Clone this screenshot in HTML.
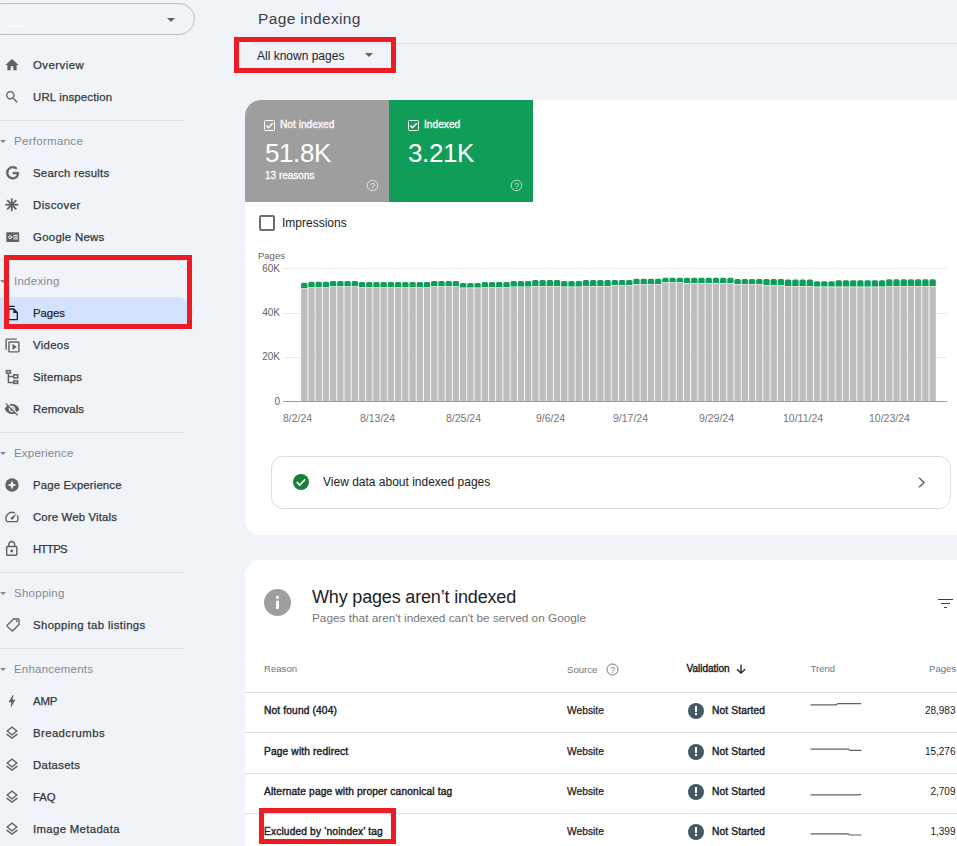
<!DOCTYPE html>
<html><head><meta charset="utf-8">
<style>
*{box-sizing:border-box;margin:0;padding:0}
html,body{width:957px;height:846px;overflow:hidden;background:#f0f3f8;font-family:"Liberation Sans",sans-serif;color:#202124}
.abs{position:absolute}
#side{position:absolute;left:0;top:0;width:240px;height:846px}
.pill{position:absolute;left:-14px;top:3px;width:209px;height:32px;border:1px solid #bcbfc3;border-radius:16px}
.nav{position:absolute;left:33px;font-size:11.4px;color:#33373a;line-height:16px;white-space:nowrap;-webkit-text-stroke:0.25px #33373a}
.hdr{position:absolute;left:14px;font-size:11.5px;color:#85898e;line-height:16px;white-space:nowrap}
.sep{position:absolute;left:0;width:184px;height:1px;background:#dfe1e5}
.tri{position:absolute;left:0px;width:0;height:0;border-left:3px solid transparent;border-right:3px solid transparent;border-top:3px solid #85898e}
.red{position:absolute;border:5px solid #ed1c24}
.card{position:absolute;left:245px;width:730px;background:#fff;border-radius:16px}
.t11{font-size:10.5px;line-height:13px;white-space:nowrap}
.med{-webkit-text-stroke:0.3px currentColor}
.row{position:absolute;left:245px;width:712px;height:1px;background:#e0e0e0}
.yl{position:absolute;left:250px;width:30px;text-align:right;font-size:10px;line-height:12px;color:#5f6368}
.xl{position:absolute;top:412px;font-size:10.5px;line-height:12px;color:#757575;white-space:nowrap}
.src{position:absolute;left:567px;font-size:10.2px;letter-spacing:0.05px;margin-top:0.3px;line-height:13px;color:#202124;white-space:nowrap;-webkit-text-stroke:0.25px #202124}
.rsn{position:absolute;left:264px;font-size:10.2px;letter-spacing:0.15px;line-height:13px;color:#202124;white-space:nowrap;-webkit-text-stroke:0.4px #202124;margin-top:0.3px}
.ns{position:absolute;left:712px;font-size:10.2px;letter-spacing:0.15px;margin-top:0.3px;line-height:13px;color:#202124;white-space:nowrap;-webkit-text-stroke:0.4px #202124}
.num{position:absolute;left:885px;width:70.5px;text-align:right;font-size:10px;line-height:13px;color:#202124;white-space:nowrap}
.vi{position:absolute;left:688px;width:16px;height:16px;border-radius:50%;background:#455a64}
.vi:before{content:"";position:absolute;left:7px;top:3.5px;width:2px;height:5.5px;background:#fff}
.vi:after{content:"";position:absolute;left:7px;top:10.5px;width:2px;height:2px;background:#fff}
</style></head><body>
<div id="side">
  <div class="pill"></div>
  <div class="abs" style="left:167px;top:18px;width:0;height:0;border-left:4px solid transparent;border-right:4px solid transparent;border-top:4px solid #5f6368"></div>
  <div class="abs" style="left:9px;top:26px;width:18px;height:1px;background:#fff"></div>

  <div class="nav" style="top:57px;letter-spacing:0.477px">Overview</div>
  <div class="nav" style="top:89px;letter-spacing:0.177px">URL inspection</div>
  <div class="sep" style="top:120px"></div>
  <div class="tri" style="top:140px"></div><div class="hdr" style="top:133px;letter-spacing:0.296px">Performance</div>
  <div class="nav" style="top:165px;letter-spacing:0.263px">Search results</div>
  <div class="nav" style="top:197px;letter-spacing:0.411px">Discover</div>
  <div class="nav" style="top:229px;letter-spacing:0.292px">Google News</div>
  <div class="sep" style="top:260px"></div>

  <div class="abs" style="left:0;top:297px;width:193px;height:32px;background:#d3e3fd;border-radius:0 16px 16px 0"></div>
  <div class="tri" style="top:280px"></div><div class="hdr" style="top:273px;letter-spacing:0.264px">Indexing</div>
  <div class="nav" style="top:305px;color:#202124;letter-spacing:-0.083px">Pages</div>
  <div class="nav" style="top:337px;letter-spacing:0.296px">Videos</div>
  <div class="nav" style="top:369px;letter-spacing:0.214px">Sitemaps</div>
  <div class="nav" style="top:401px;letter-spacing:0.057px">Removals</div>
  <div class="sep" style="top:432px"></div>
  <div class="tri" style="top:452px"></div><div class="hdr" style="top:445px;letter-spacing:0.195px">Experience</div>
  <div class="nav" style="top:477px;letter-spacing:0.122px">Page Experience</div>
  <div class="nav" style="top:509px;letter-spacing:0.141px">Core Web Vitals</div>
  <div class="nav" style="top:541px;letter-spacing:-0.669px">HTTPS</div>
  <div class="sep" style="top:572px"></div>
  <div class="tri" style="top:592px"></div><div class="hdr" style="top:585px;letter-spacing:0.261px">Shopping</div>
  <div class="nav" style="top:617px;letter-spacing:0.356px">Shopping tab listings</div>
  <div class="sep" style="top:648px"></div>
  <div class="tri" style="top:668px"></div><div class="hdr" style="top:661px;letter-spacing:0.198px">Enhancements</div>
  <div class="nav" style="top:693px;letter-spacing:-0.129px">AMP</div>
  <div class="nav" style="top:725px;letter-spacing:0.386px">Breadcrumbs</div>
  <div class="nav" style="top:757px;letter-spacing:0.293px">Datasets</div>
  <div class="nav" style="top:789px;letter-spacing:-0.066px">FAQ</div>
  <div class="nav" style="top:821px;letter-spacing:0.327px">Image Metadata</div>

  <svg class="abs" style="left:4.0px;top:57.0px" width="16" height="16" viewBox="0 0 24 24" ><path d="M10 20v-6h4v6h5v-8h3L12 3 2 12h3v8z" fill="#5f6368" /></svg>
<svg class="abs" style="left:4.0px;top:89.0px" width="16" height="16" viewBox="0 0 24 24" ><path d="M15.5 14h-.79l-.28-.27C15.41 12.59 16 11.11 16 9.5 16 5.91 13.09 3 9.5 3S3 5.91 3 9.5 5.91 16 9.5 16c1.61 0 3.09-.59 4.23-1.57l.27.28v.79l5 4.99L20.49 19l-4.99-5zm-6 0C7.01 14 5 11.99 5 9.5S7.01 5 9.5 5 14 7.01 14 9.5 11.99 14 9.5 14z" fill="#5f6368" /></svg>
<svg class="abs" style="left:4.8px;top:165.2px" width="15.5" height="15.5" viewBox="0 0 24 24" ><path d="M21.35 11.1h-9.17v2.73h6.51c-.33 3.81-3.5 5.44-6.5 5.44C8.36 19.27 5 16.25 5 12c0-4.1 3.2-7.27 7.2-7.27 3.09 0 4.9 1.97 4.9 1.97L19 4.72S16.56 2 12.1 2C6.42 2 2.03 6.8 2.03 12c0 5.05 4.13 10 10.22 10 5.35 0 9.25-3.67 9.25-9.09 0-1.15-.15-1.81-.15-1.81z" fill="#5f6368" stroke="#5f6368" stroke-width="0.9"/></svg>
<svg class="abs" style="left:4.2px;top:197.2px" width="15.5" height="15.5" viewBox="0 0 24 24" ><line x1="12" y1="2" x2="12" y2="22" transform="rotate(0 12 12)" stroke="#5f6368" stroke-width="2.8"/><line x1="12" y1="2" x2="12" y2="22" transform="rotate(45 12 12)" stroke="#5f6368" stroke-width="2.8"/><line x1="12" y1="2" x2="12" y2="22" transform="rotate(90 12 12)" stroke="#5f6368" stroke-width="2.8"/><line x1="12" y1="2" x2="12" y2="22" transform="rotate(135 12 12)" stroke="#5f6368" stroke-width="2.8"/></svg>
<svg class="abs" style="left:4.8px;top:229.2px" width="15.5" height="15.5" viewBox="0 0 24 24" ><rect x="2" y="5" width="20" height="15" rx="1.2" fill="#5f6368"/><circle cx="8" cy="12.5" r="2.4" fill="none" stroke="#f0f3f8" stroke-width="1.4"/><rect x="8" y="11.8" width="3.4" height="1.4" fill="#f0f3f8"/><rect x="8.6" y="8.6" width="3" height="2.2" fill="#5f6368"/><rect x="13" y="9" width="7" height="1.6" fill="#f0f3f8"/><rect x="13" y="11.8" width="7" height="1.6" fill="#f0f3f8"/><rect x="13" y="14.6" width="7" height="1.6" fill="#f0f3f8"/></svg>
<svg class="abs" style="left:4.0px;top:305.0px" width="16" height="16" viewBox="0 0 24 24" ><path d="M16 1H4c-1.1 0-2 .9-2 2v14h2V3h12V1zm-1 4H8c-1.1 0-1.99.9-1.99 2L6 21c0 1.1.89 2 1.99 2H19c1.1 0 2-.9 2-2V11l-6-6zM8 21V7h6v5h5v9H8z" fill="#202124" /></svg>
<svg class="abs" style="left:3.5px;top:336.5px" width="17" height="17" viewBox="0 0 24 24" ><g transform="translate(0,24) scale(1,-1)"><path d="M4 6H2v14c0 1.1.9 2 2 2h14v-2H4V6zm16-4H8c-1.1 0-2 .9-2 2v12c0 1.1.9 2 2 2h12c1.1 0 2-.9 2-2V4c0-1.1-.9-2-2-2zm0 14H8V4h12v12zM12 5.5v9l6-4.5z" fill="#5f6368" /></g></svg>
<svg class="abs" style="left:4.0px;top:369.0px" width="16" height="16" viewBox="0 0 16 16" ><g fill="none" stroke="#5f6368" stroke-width="1.5"><rect x="2.400" y="1.600" width="4" height="2.500"/><rect x="9.800" y="5.800" width="3.900" height="3.200"/><rect x="9.800" y="11.900" width="3.900" height="2.500"/><path d="M4.400 4.700 V13.400 H9.200 M4.400 7.400 H9.200"/></g></svg>
<svg class="abs" style="left:4.0px;top:401.0px" width="16" height="16" viewBox="0 0 24 24" ><path d="M12 7c2.76 0 5 2.24 5 5 0 .65-.13 1.26-.36 1.83l2.92 2.92c1.51-1.26 2.7-2.89 3.43-4.75-1.73-4.39-6-7.5-11-7.5-1.4 0-2.74.25-3.98.7l2.16 2.16C10.74 7.13 11.35 7 12 7zM2 4.27l2.28 2.28.46.46C3.08 8.3 1.78 10.02 1 12c1.73 4.39 6 7.5 11 7.5 1.55 0 3.03-.3 4.38-.84l.42.42L19.73 22 21 20.73 3.27 3 2 4.27zM7.53 9.8l1.55 1.55c-.05.21-.08.43-.08.65 0 1.66 1.34 3 3 3 .22 0 .44-.03.65-.08l1.55 1.55c-.67.33-1.41.53-2.2.53-2.76 0-5-2.24-5-5 0-.79.2-1.53.53-2.2zm4.31-.78l3.15 3.15.02-.16c0-1.66-1.34-3-3-3l-.17.01z" fill="#5f6368" /></svg>
<svg class="abs" style="left:4.0px;top:477.0px" width="16" height="16" viewBox="0 0 24 24" ><circle cx="12" cy="12" r="10" fill="#5f6368"/><path d="M12 5 L13.9 10.1 L19 12 L13.9 13.9 L12 19 L10.1 13.9 L5 12 L10.1 10.1 Z" fill="#f0f3f8"/></svg>
<svg class="abs" style="left:4.0px;top:509.0px" width="16" height="16" viewBox="0 0 24 24" ><path d="M20.38 8.57l-1.23 1.85a8 8 0 0 1-.22 7.58H5.07A8 8 0 0 1 15.58 6.85l1.85-1.23A10 10 0 0 0 3.35 19a2 2 0 0 0 1.72 1h13.85a2 2 0 0 0 1.74-1 10 10 0 0 0-.27-10.44zm-9.79 6.84a2 2 0 0 0 2.83 0l5.66-8.49-8.49 5.66a2 2 0 0 0 0 2.83z" fill="#5f6368" /></svg>
<svg class="abs" style="left:3.1px;top:540.2px" width="17.5" height="17.5" viewBox="0 0 24 24" ><path d="M18 8h-1V6c0-2.76-2.24-5-5-5S7 3.24 7 6v2H6c-1.1 0-2 .9-2 2v10c0 1.1.9 2 2 2h12c1.1 0 2-.9 2-2V10c0-1.1-.9-2-2-2zM9 6c0-1.66 1.34-3 3-3s3 1.34 3 3v2H9V6zm9 14H6V10h12v10zm-6-3c1.1 0 2-.9 2-2s-.9-2-2-2-2 .9-2 2 .9 2 2 2z" fill="#5f6368" /></svg>
<svg class="abs" style="left:4.8px;top:617.0px" width="16" height="16" viewBox="0 0 24 24" ><g transform="translate(24,0) scale(-1,1)"><path d="M21.41 11.58l-9-9C12.05 2.22 11.55 2 11 2H4c-1.1 0-2 .9-2 2v7c0 .55.22 1.05.59 1.42l9 9c.36.36.86.58 1.41.58s1.05-.22 1.41-.59l7-7c.37-.36.59-.86.59-1.41s-.23-1.060-.59-1.420zM13 20.010L4 11V4h7v-.010l9 9-7 7.020z" fill="#5f6368" /><circle cx="6.5" cy="6.5" r="1.5" fill="#5f6368"/></g></svg>
<svg class="abs" style="left:4.0px;top:693.0px" width="16" height="16" viewBox="0 0 24 24" ><path d="M11 21h-1l1-7H7.5c-.58 0-.57-.32-.38-.66.19-.34.05-.08.07-.12C8.48 10.94 10.42 7.54 13 3h1l-1 7h3.5c.49 0 .56.33.47.51l-.07.15C12.96 17.55 11 21 11 21z" fill="#5f6368" /></svg>
<svg class="abs" style="left:4.0px;top:725.0px" width="16" height="16" viewBox="0 0 24 24" ><path d="M11.99 18.54l-7.37-5.73L3 14.07l9 7 9-7-1.63-1.27-7.38 5.74zM12 16l7.36-5.73L21 9l-9-7-9 7 1.63 1.27L12 16zm0-11.470L17.740 9 12 13.470 6.260 9 12 4.530z" fill="#5f6368" /></svg>
<svg class="abs" style="left:4.0px;top:757.0px" width="16" height="16" viewBox="0 0 24 24" ><path d="M11.99 18.54l-7.37-5.73L3 14.07l9 7 9-7-1.63-1.27-7.38 5.74zM12 16l7.36-5.73L21 9l-9-7-9 7 1.63 1.27L12 16zm0-11.470L17.740 9 12 13.470 6.260 9 12 4.530z" fill="#5f6368" /></svg>
<svg class="abs" style="left:4.0px;top:789.0px" width="16" height="16" viewBox="0 0 24 24" ><path d="M11.99 18.54l-7.37-5.73L3 14.07l9 7 9-7-1.63-1.27-7.38 5.74zM12 16l7.36-5.73L21 9l-9-7-9 7 1.63 1.27L12 16zm0-11.470L17.740 9 12 13.470 6.260 9 12 4.530z" fill="#5f6368" /></svg>
<svg class="abs" style="left:4.0px;top:821.0px" width="16" height="16" viewBox="0 0 24 24" ><path d="M11.99 18.54l-7.37-5.73L3 14.07l9 7 9-7-1.63-1.27-7.38 5.74zM12 16l7.36-5.73L21 9l-9-7-9 7 1.63 1.27L12 16zm0-11.470L17.740 9 12 13.470 6.260 9 12 4.530z" fill="#5f6368" /></svg>
  <div class="red" style="left:4px;top:255px;width:188px;height:74px"></div>
</div>

<!-- MAIN -->
<div class="abs" style="left:258px;top:8.6px;font-size:15.5px;line-height:20px;color:#3c4043;white-space:nowrap;letter-spacing:0.35px">Page indexing</div>
<div class="abs" style="left:254px;top:43px;width:703px;height:1px;background:#dadce0"></div>
<div class="abs" style="left:257px;top:47.5px;font-size:12px;line-height:16px;color:#202124;white-space:nowrap">All known pages</div>
<div class="abs" style="left:365px;top:53px;width:0;height:0;border-left:4px solid transparent;border-right:4px solid transparent;border-top:4px solid #5f6368"></div>
<div class="red" style="left:234px;top:37px;width:162px;height:36px"></div>

<div class="card" style="top:100px;height:435px"></div>
<div class="abs" style="left:245px;top:100px;width:144px;height:102px;background:#9e9e9e;border-radius:16px 0 0 0"></div>
<div class="abs" style="left:389px;top:100px;width:144px;height:102px;background:#0f9d58"></div>
<!-- tile checkboxes -->
<svg class="abs" style="left:264px;top:120px" width="11" height="11" viewBox="0 0 11 11"><rect x="0.5" y="0.5" width="10" height="10" rx="1" fill="none" stroke="#fff" stroke-width="1"/><path d="M2.4 5.6 L4.5 7.7 L8.7 3.2" fill="none" stroke="#fff" stroke-width="1.5"/></svg>
<svg class="abs" style="left:408px;top:120px" width="11" height="11" viewBox="0 0 11 11"><rect x="0.5" y="0.5" width="10" height="10" rx="1" fill="none" stroke="#fff" stroke-width="1"/><path d="M2.4 5.6 L4.5 7.7 L8.7 3.2" fill="none" stroke="#fff" stroke-width="1.5"/></svg>
<div class="abs" style="left:280px;top:118px;color:#fff;font-size:10.2px;line-height:13px;white-space:nowrap;-webkit-text-stroke:0.3px #fff">Not indexed</div>
<div class="abs" style="left:424px;top:118px;color:#fff;font-size:10.2px;line-height:13px;white-space:nowrap;-webkit-text-stroke:0.3px #fff">Indexed</div>
<div class="abs" style="left:265px;top:138px;color:#fff;font-size:26px;line-height:30px;white-space:nowrap;letter-spacing:-0.4px">51.8K</div>
<div class="abs" style="left:408px;top:138px;color:#fff;font-size:26px;line-height:30px;white-space:nowrap;letter-spacing:-0.4px">3.21K</div>
<div class="abs" style="left:265px;top:169.5px;color:#fff;font-size:10px;line-height:12px;white-space:nowrap;-webkit-text-stroke:0.3px #fff">13 reasons</div>
<!-- help icons in tiles -->
<svg class="abs" style="left:366px;top:179px" width="13" height="13" viewBox="0 0 13 13"><circle cx="6.5" cy="6.5" r="5.3" fill="none" stroke="#fff" stroke-opacity="0.7" stroke-width="1"/><text x="6.5" y="9.6" text-anchor="middle" font-family="Liberation Sans" font-size="8.5" fill="#fff" fill-opacity="0.75">?</text></svg>
<svg class="abs" style="left:510px;top:179px" width="13" height="13" viewBox="0 0 13 13"><circle cx="6.5" cy="6.5" r="5.3" fill="none" stroke="#fff" stroke-opacity="0.7" stroke-width="1"/><text x="6.5" y="9.6" text-anchor="middle" font-family="Liberation Sans" font-size="8.5" fill="#fff" fill-opacity="0.75">?</text></svg>

<div class="abs" style="left:258.5px;top:215px;width:16px;height:16px;border:2px solid #6e6e6e;border-radius:2px"></div>
<div class="abs" style="left:282px;top:214.5px;font-size:12px;line-height:16px;color:#202124;white-space:nowrap">Impressions</div>

<svg class="abs" style="left:0;top:0" width="957" height="846" viewBox="0 0 957 846">
  <g stroke="#ebebeb" stroke-width="1">
    <line x1="283" y1="268.5" x2="947" y2="268.5"/>
    <line x1="283" y1="313.5" x2="947" y2="313.5"/>
    <line x1="283" y1="357.5" x2="947" y2="357.5"/>
  </g>
  <path d="M301.10 288.3 V284.3 Q301.10 282.7 302.70 282.7 H305.82 Q307.42 282.7 307.42 284.3 V288.3 Z" fill="#0f9d58"/>
<rect x="301.10" y="288.9" width="6.32" height="112.1" fill="#bdbdbd"/>
<path d="M308.32 287.2 V283.4 Q308.32 281.8 309.92 281.8 H313.05 Q314.65 281.8 314.65 283.4 V287.2 Z" fill="#0f9d58"/>
<rect x="308.32" y="287.8" width="6.32" height="113.2" fill="#bdbdbd"/>
<path d="M315.55 287.2 V283.4 Q315.55 281.8 317.15 281.8 H320.27 Q321.87 281.8 321.87 283.4 V287.2 Z" fill="#0f9d58"/>
<rect x="315.55" y="287.8" width="6.32" height="113.2" fill="#bdbdbd"/>
<path d="M322.77 287.2 V283.4 Q322.77 281.8 324.37 281.8 H327.49 Q329.09 281.8 329.09 283.4 V287.2 Z" fill="#0f9d58"/>
<rect x="322.77" y="287.8" width="6.32" height="113.2" fill="#bdbdbd"/>
<path d="M329.99 286.2 V282.6 Q329.99 281.0 331.59 281.0 H334.71 Q336.31 281.0 336.31 282.6 V286.2 Z" fill="#0f9d58"/>
<rect x="329.99" y="286.8" width="6.32" height="114.2" fill="#bdbdbd"/>
<path d="M337.21 286.2 V282.6 Q337.21 281.0 338.81 281.0 H341.94 Q343.54 281.0 343.54 282.6 V286.2 Z" fill="#0f9d58"/>
<rect x="337.21" y="286.8" width="6.32" height="114.2" fill="#bdbdbd"/>
<path d="M344.44 286.2 V282.6 Q344.44 281.0 346.04 281.0 H349.16 Q350.76 281.0 350.76 282.6 V286.2 Z" fill="#0f9d58"/>
<rect x="344.44" y="286.8" width="6.32" height="114.2" fill="#bdbdbd"/>
<path d="M351.66 286.2 V282.6 Q351.66 281.0 353.26 281.0 H356.38 Q357.98 281.0 357.98 282.6 V286.2 Z" fill="#0f9d58"/>
<rect x="351.66" y="286.8" width="6.32" height="114.2" fill="#bdbdbd"/>
<path d="M358.88 287.2 V283.6 Q358.88 282.0 360.48 282.0 H363.60 Q365.20 282.0 365.20 283.6 V287.2 Z" fill="#0f9d58"/>
<rect x="358.88" y="287.8" width="6.32" height="113.2" fill="#bdbdbd"/>
<path d="M366.10 287.2 V283.6 Q366.10 282.0 367.70 282.0 H370.83 Q372.43 282.0 372.43 283.6 V287.2 Z" fill="#0f9d58"/>
<rect x="366.10" y="287.8" width="6.32" height="113.2" fill="#bdbdbd"/>
<path d="M373.33 287.2 V283.6 Q373.33 282.0 374.93 282.0 H378.05 Q379.65 282.0 379.65 283.6 V287.2 Z" fill="#0f9d58"/>
<rect x="373.33" y="287.8" width="6.32" height="113.2" fill="#bdbdbd"/>
<path d="M380.55 287.2 V283.6 Q380.55 282.0 382.15 282.0 H385.27 Q386.87 282.0 386.87 283.6 V287.2 Z" fill="#0f9d58"/>
<rect x="380.55" y="287.8" width="6.32" height="113.2" fill="#bdbdbd"/>
<path d="M387.77 287.2 V283.6 Q387.77 282.0 389.37 282.0 H392.50 Q394.10 282.0 394.10 283.6 V287.2 Z" fill="#0f9d58"/>
<rect x="387.77" y="287.8" width="6.32" height="113.2" fill="#bdbdbd"/>
<path d="M395.00 287.2 V283.6 Q395.00 282.0 396.60 282.0 H399.72 Q401.32 282.0 401.32 283.6 V287.2 Z" fill="#0f9d58"/>
<rect x="395.00" y="287.8" width="6.32" height="113.2" fill="#bdbdbd"/>
<path d="M402.22 287.2 V283.6 Q402.22 282.0 403.82 282.0 H406.94 Q408.54 282.0 408.54 283.6 V287.2 Z" fill="#0f9d58"/>
<rect x="402.22" y="287.8" width="6.32" height="113.2" fill="#bdbdbd"/>
<path d="M409.44 287.2 V283.6 Q409.44 282.0 411.04 282.0 H414.16 Q415.76 282.0 415.76 283.6 V287.2 Z" fill="#0f9d58"/>
<rect x="409.44" y="287.8" width="6.32" height="113.2" fill="#bdbdbd"/>
<path d="M416.66 287.2 V283.6 Q416.66 282.0 418.26 282.0 H421.39 Q422.99 282.0 422.99 283.6 V287.2 Z" fill="#0f9d58"/>
<rect x="416.66" y="287.8" width="6.32" height="113.2" fill="#bdbdbd"/>
<path d="M423.89 287.2 V283.6 Q423.89 282.0 425.49 282.0 H428.61 Q430.21 282.0 430.21 283.6 V287.2 Z" fill="#0f9d58"/>
<rect x="423.89" y="287.8" width="6.32" height="113.2" fill="#bdbdbd"/>
<path d="M431.11 286.2 V282.6 Q431.11 281.0 432.71 281.0 H435.83 Q437.43 281.0 437.43 282.6 V286.2 Z" fill="#0f9d58"/>
<rect x="431.11" y="286.8" width="6.32" height="114.2" fill="#bdbdbd"/>
<path d="M438.33 286.2 V282.6 Q438.33 281.0 439.93 281.0 H443.05 Q444.65 281.0 444.65 282.6 V286.2 Z" fill="#0f9d58"/>
<rect x="438.33" y="286.8" width="6.32" height="114.2" fill="#bdbdbd"/>
<path d="M445.55 286.2 V282.6 Q445.55 281.0 447.15 281.0 H450.28 Q451.88 281.0 451.88 282.6 V286.2 Z" fill="#0f9d58"/>
<rect x="445.55" y="286.8" width="6.32" height="114.2" fill="#bdbdbd"/>
<path d="M452.78 286.2 V282.6 Q452.78 281.0 454.38 281.0 H457.50 Q459.10 281.0 459.10 282.6 V286.2 Z" fill="#0f9d58"/>
<rect x="452.78" y="286.8" width="6.32" height="114.2" fill="#bdbdbd"/>
<path d="M460.00 287.6 V284.5 Q460.00 282.9 461.60 282.9 H464.72 Q466.32 282.9 466.32 284.5 V287.6 Z" fill="#0f9d58"/>
<rect x="460.00" y="288.2" width="6.32" height="112.8" fill="#bdbdbd"/>
<path d="M467.22 287.6 V284.5 Q467.22 282.9 468.82 282.9 H471.95 Q473.55 282.9 473.55 284.5 V287.6 Z" fill="#0f9d58"/>
<rect x="467.22" y="288.2" width="6.32" height="112.8" fill="#bdbdbd"/>
<path d="M474.45 287.6 V284.5 Q474.45 282.9 476.05 282.9 H479.17 Q480.77 282.9 480.77 284.5 V287.6 Z" fill="#0f9d58"/>
<rect x="474.45" y="288.2" width="6.32" height="112.8" fill="#bdbdbd"/>
<path d="M481.67 287.2 V283.6 Q481.67 282.0 483.27 282.0 H486.39 Q487.99 282.0 487.99 283.6 V287.2 Z" fill="#0f9d58"/>
<rect x="481.67" y="287.8" width="6.32" height="113.2" fill="#bdbdbd"/>
<path d="M488.89 287.2 V283.6 Q488.89 282.0 490.49 282.0 H493.61 Q495.21 282.0 495.21 283.6 V287.2 Z" fill="#0f9d58"/>
<rect x="488.89" y="287.8" width="6.32" height="113.2" fill="#bdbdbd"/>
<path d="M496.11 287.2 V283.6 Q496.11 282.0 497.71 282.0 H500.84 Q502.44 282.0 502.44 283.6 V287.2 Z" fill="#0f9d58"/>
<rect x="496.11" y="287.8" width="6.32" height="113.2" fill="#bdbdbd"/>
<path d="M503.34 287.2 V283.6 Q503.34 282.0 504.94 282.0 H508.06 Q509.66 282.0 509.66 283.6 V287.2 Z" fill="#0f9d58"/>
<rect x="503.34" y="287.8" width="6.32" height="113.2" fill="#bdbdbd"/>
<path d="M510.56 286.4 V282.6 Q510.56 281.0 512.16 281.0 H515.28 Q516.88 281.0 516.88 282.6 V286.4 Z" fill="#0f9d58"/>
<rect x="510.56" y="287.0" width="6.32" height="114.0" fill="#bdbdbd"/>
<path d="M517.78 286.4 V282.6 Q517.78 281.0 519.38 281.0 H522.50 Q524.10 281.0 524.10 282.6 V286.4 Z" fill="#0f9d58"/>
<rect x="517.78" y="287.0" width="6.32" height="114.0" fill="#bdbdbd"/>
<path d="M525.00 286.4 V282.6 Q525.00 281.0 526.60 281.0 H529.73 Q531.33 281.0 531.33 282.6 V286.4 Z" fill="#0f9d58"/>
<rect x="525.00" y="287.0" width="6.32" height="114.0" fill="#bdbdbd"/>
<path d="M532.23 285.9 V281.5 Q532.23 279.9 533.83 279.9 H536.95 Q538.55 279.9 538.55 281.5 V285.9 Z" fill="#0f9d58"/>
<rect x="532.23" y="286.5" width="6.32" height="114.5" fill="#bdbdbd"/>
<path d="M539.45 285.9 V281.5 Q539.45 279.9 541.05 279.9 H544.17 Q545.77 279.9 545.77 281.5 V285.9 Z" fill="#0f9d58"/>
<rect x="539.45" y="286.5" width="6.32" height="114.5" fill="#bdbdbd"/>
<path d="M546.67 285.9 V281.5 Q546.67 279.9 548.27 279.9 H551.40 Q553.00 279.9 553.00 281.5 V285.9 Z" fill="#0f9d58"/>
<rect x="546.67" y="286.5" width="6.32" height="114.5" fill="#bdbdbd"/>
<path d="M553.90 285.9 V281.5 Q553.90 279.9 555.50 279.9 H558.62 Q560.22 279.9 560.22 281.5 V285.9 Z" fill="#0f9d58"/>
<rect x="553.90" y="286.5" width="6.32" height="114.5" fill="#bdbdbd"/>
<path d="M561.12 286.5 V282.5 Q561.12 280.9 562.72 280.9 H565.84 Q567.44 280.9 567.44 282.5 V286.5 Z" fill="#0f9d58"/>
<rect x="561.12" y="287.1" width="6.32" height="113.9" fill="#bdbdbd"/>
<path d="M568.34 286.5 V282.5 Q568.34 280.9 569.94 280.9 H573.06 Q574.66 280.9 574.66 282.5 V286.5 Z" fill="#0f9d58"/>
<rect x="568.34" y="287.1" width="6.32" height="113.9" fill="#bdbdbd"/>
<path d="M575.56 286.5 V282.5 Q575.56 280.9 577.16 280.9 H580.29 Q581.89 280.9 581.89 282.5 V286.5 Z" fill="#0f9d58"/>
<rect x="575.56" y="287.1" width="6.32" height="113.9" fill="#bdbdbd"/>
<path d="M582.79 285.9 V281.5 Q582.79 279.9 584.39 279.9 H587.51 Q589.11 279.9 589.11 281.5 V285.9 Z" fill="#0f9d58"/>
<rect x="582.79" y="286.5" width="6.32" height="114.5" fill="#bdbdbd"/>
<path d="M590.01 285.9 V281.5 Q590.01 279.9 591.61 279.9 H594.73 Q596.33 279.9 596.33 281.5 V285.9 Z" fill="#0f9d58"/>
<rect x="590.01" y="286.5" width="6.32" height="114.5" fill="#bdbdbd"/>
<path d="M597.23 285.9 V281.5 Q597.23 279.9 598.83 279.9 H601.95 Q603.55 279.9 603.55 281.5 V285.9 Z" fill="#0f9d58"/>
<rect x="597.23" y="286.5" width="6.32" height="114.5" fill="#bdbdbd"/>
<path d="M604.45 285.9 V281.5 Q604.45 279.9 606.05 279.9 H609.18 Q610.78 279.9 610.78 281.5 V285.9 Z" fill="#0f9d58"/>
<rect x="604.45" y="286.5" width="6.32" height="114.5" fill="#bdbdbd"/>
<path d="M611.68 284.9 V281.5 Q611.68 279.9 613.28 279.9 H616.40 Q618.00 279.9 618.00 281.5 V284.9 Z" fill="#0f9d58"/>
<rect x="611.68" y="285.5" width="6.32" height="115.5" fill="#bdbdbd"/>
<path d="M618.90 284.9 V281.5 Q618.90 279.9 620.50 279.9 H623.62 Q625.22 279.9 625.22 281.5 V284.9 Z" fill="#0f9d58"/>
<rect x="618.90" y="285.5" width="6.32" height="115.5" fill="#bdbdbd"/>
<path d="M626.12 284.9 V281.5 Q626.12 279.9 627.72 279.9 H630.85 Q632.45 279.9 632.45 281.5 V284.9 Z" fill="#0f9d58"/>
<rect x="626.12" y="285.5" width="6.32" height="115.5" fill="#bdbdbd"/>
<path d="M633.35 283.9 V280.4 Q633.35 278.8 634.95 278.8 H638.07 Q639.67 278.8 639.67 280.4 V283.9 Z" fill="#0f9d58"/>
<rect x="633.35" y="284.5" width="6.32" height="116.5" fill="#bdbdbd"/>
<path d="M640.57 283.9 V280.4 Q640.57 278.8 642.17 278.8 H645.29 Q646.89 278.8 646.89 280.4 V283.9 Z" fill="#0f9d58"/>
<rect x="640.57" y="284.5" width="6.32" height="116.5" fill="#bdbdbd"/>
<path d="M647.79 283.9 V280.4 Q647.79 278.8 649.39 278.8 H652.51 Q654.11 278.8 654.11 280.4 V283.9 Z" fill="#0f9d58"/>
<rect x="647.79" y="284.5" width="6.32" height="116.5" fill="#bdbdbd"/>
<path d="M655.01 283.9 V280.4 Q655.01 278.8 656.61 278.8 H659.74 Q661.34 278.8 661.34 280.4 V283.9 Z" fill="#0f9d58"/>
<rect x="655.01" y="284.5" width="6.32" height="116.5" fill="#bdbdbd"/>
<path d="M662.24 282.3 V279.4 Q662.24 277.8 663.84 277.8 H666.96 Q668.56 277.8 668.56 279.4 V282.3 Z" fill="#0f9d58"/>
<rect x="662.24" y="282.9" width="6.32" height="118.1" fill="#bdbdbd"/>
<path d="M669.46 282.3 V279.4 Q669.46 277.8 671.06 277.8 H674.18 Q675.78 277.8 675.78 279.4 V282.3 Z" fill="#0f9d58"/>
<rect x="669.46" y="282.9" width="6.32" height="118.1" fill="#bdbdbd"/>
<path d="M676.68 282.3 V279.4 Q676.68 277.8 678.28 277.8 H681.40 Q683.00 277.8 683.00 279.4 V282.3 Z" fill="#0f9d58"/>
<rect x="676.68" y="282.9" width="6.32" height="118.1" fill="#bdbdbd"/>
<path d="M683.90 283.0 V279.4 Q683.90 277.8 685.50 277.8 H688.63 Q690.23 277.8 690.23 279.4 V283.0 Z" fill="#0f9d58"/>
<rect x="683.90" y="283.6" width="6.32" height="117.4" fill="#bdbdbd"/>
<path d="M691.13 283.0 V279.4 Q691.13 277.8 692.73 277.8 H695.85 Q697.45 277.8 697.45 279.4 V283.0 Z" fill="#0f9d58"/>
<rect x="691.13" y="283.6" width="6.32" height="117.4" fill="#bdbdbd"/>
<path d="M698.35 283.0 V279.4 Q698.35 277.8 699.95 277.8 H703.07 Q704.67 277.8 704.67 279.4 V283.0 Z" fill="#0f9d58"/>
<rect x="698.35" y="283.6" width="6.32" height="117.4" fill="#bdbdbd"/>
<path d="M705.57 283.0 V279.4 Q705.57 277.8 707.17 277.8 H710.30 Q711.90 277.8 711.90 279.4 V283.0 Z" fill="#0f9d58"/>
<rect x="705.57" y="283.6" width="6.32" height="117.4" fill="#bdbdbd"/>
<path d="M712.80 283.0 V279.4 Q712.80 277.8 714.40 277.8 H717.52 Q719.12 277.8 719.12 279.4 V283.0 Z" fill="#0f9d58"/>
<rect x="712.80" y="283.6" width="6.32" height="117.4" fill="#bdbdbd"/>
<path d="M720.02 283.0 V279.4 Q720.02 277.8 721.62 277.8 H724.74 Q726.34 277.8 726.34 279.4 V283.0 Z" fill="#0f9d58"/>
<rect x="720.02" y="283.6" width="6.32" height="117.4" fill="#bdbdbd"/>
<path d="M727.24 283.0 V279.4 Q727.24 277.8 728.84 277.8 H731.96 Q733.56 277.8 733.56 279.4 V283.0 Z" fill="#0f9d58"/>
<rect x="727.24" y="283.6" width="6.32" height="117.4" fill="#bdbdbd"/>
<path d="M734.46 283.9 V280.5 Q734.46 278.9 736.06 278.9 H739.19 Q740.79 278.9 740.79 280.5 V283.9 Z" fill="#0f9d58"/>
<rect x="734.46" y="284.5" width="6.32" height="116.5" fill="#bdbdbd"/>
<path d="M741.69 283.9 V280.5 Q741.69 278.9 743.29 278.9 H746.41 Q748.01 278.9 748.01 280.5 V283.9 Z" fill="#0f9d58"/>
<rect x="741.69" y="284.5" width="6.32" height="116.5" fill="#bdbdbd"/>
<path d="M748.91 283.9 V280.5 Q748.91 278.9 750.51 278.9 H753.63 Q755.23 278.9 755.23 280.5 V283.9 Z" fill="#0f9d58"/>
<rect x="748.91" y="284.5" width="6.32" height="116.5" fill="#bdbdbd"/>
<path d="M756.13 283.9 V280.5 Q756.13 278.9 757.73 278.9 H760.85 Q762.45 278.9 762.45 280.5 V283.9 Z" fill="#0f9d58"/>
<rect x="756.13" y="284.5" width="6.32" height="116.5" fill="#bdbdbd"/>
<path d="M763.35 284.9 V280.5 Q763.35 278.9 764.95 278.9 H768.08 Q769.68 278.9 769.68 280.5 V284.9 Z" fill="#0f9d58"/>
<rect x="763.35" y="285.5" width="6.32" height="115.5" fill="#bdbdbd"/>
<path d="M770.58 284.9 V280.5 Q770.58 278.9 772.18 278.9 H775.30 Q776.90 278.9 776.90 280.5 V284.9 Z" fill="#0f9d58"/>
<rect x="770.58" y="285.5" width="6.32" height="115.5" fill="#bdbdbd"/>
<path d="M777.80 284.9 V280.5 Q777.80 278.9 779.40 278.9 H782.52 Q784.12 278.9 784.12 280.5 V284.9 Z" fill="#0f9d58"/>
<rect x="777.80" y="285.5" width="6.32" height="115.5" fill="#bdbdbd"/>
<path d="M785.02 285.9 V281.1 Q785.02 279.5 786.62 279.5 H789.75 Q791.35 279.5 791.35 281.1 V285.9 Z" fill="#0f9d58"/>
<rect x="785.02" y="286.5" width="6.32" height="114.5" fill="#bdbdbd"/>
<path d="M792.25 285.9 V281.1 Q792.25 279.5 793.85 279.5 H796.97 Q798.57 279.5 798.57 281.1 V285.9 Z" fill="#0f9d58"/>
<rect x="792.25" y="286.5" width="6.32" height="114.5" fill="#bdbdbd"/>
<path d="M799.47 285.9 V281.1 Q799.47 279.5 801.07 279.5 H804.19 Q805.79 279.5 805.79 281.1 V285.9 Z" fill="#0f9d58"/>
<rect x="799.47" y="286.5" width="6.32" height="114.5" fill="#bdbdbd"/>
<path d="M806.69 285.9 V281.1 Q806.69 279.5 808.29 279.5 H811.41 Q813.01 279.5 813.01 281.1 V285.9 Z" fill="#0f9d58"/>
<rect x="806.69" y="286.5" width="6.32" height="114.5" fill="#bdbdbd"/>
<path d="M813.91 286.6 V282.8 Q813.91 281.2 815.51 281.2 H818.64 Q820.24 281.2 820.24 282.8 V286.6 Z" fill="#0f9d58"/>
<rect x="813.91" y="287.2" width="6.32" height="113.8" fill="#bdbdbd"/>
<path d="M821.14 286.6 V282.8 Q821.14 281.2 822.74 281.2 H825.86 Q827.46 281.2 827.46 282.8 V286.6 Z" fill="#0f9d58"/>
<rect x="821.14" y="287.2" width="6.32" height="113.8" fill="#bdbdbd"/>
<path d="M828.36 286.6 V282.8 Q828.36 281.2 829.96 281.2 H833.08 Q834.68 281.2 834.68 282.8 V286.6 Z" fill="#0f9d58"/>
<rect x="828.36" y="287.2" width="6.32" height="113.8" fill="#bdbdbd"/>
<path d="M835.58 286.6 V281.8 Q835.58 280.2 837.18 280.2 H840.30 Q841.90 280.2 841.90 281.8 V286.6 Z" fill="#0f9d58"/>
<rect x="835.58" y="287.2" width="6.32" height="113.8" fill="#bdbdbd"/>
<path d="M842.80 286.6 V281.8 Q842.80 280.2 844.40 280.2 H847.53 Q849.13 280.2 849.13 281.8 V286.6 Z" fill="#0f9d58"/>
<rect x="842.80" y="287.2" width="6.32" height="113.8" fill="#bdbdbd"/>
<path d="M850.03 286.6 V281.8 Q850.03 280.2 851.63 280.2 H854.75 Q856.35 280.2 856.35 281.8 V286.6 Z" fill="#0f9d58"/>
<rect x="850.03" y="287.2" width="6.32" height="113.8" fill="#bdbdbd"/>
<path d="M857.25 286.6 V281.8 Q857.25 280.2 858.85 280.2 H861.97 Q863.57 280.2 863.57 281.8 V286.6 Z" fill="#0f9d58"/>
<rect x="857.25" y="287.2" width="6.32" height="113.8" fill="#bdbdbd"/>
<path d="M864.47 286.6 V281.8 Q864.47 280.2 866.07 280.2 H869.20 Q870.80 280.2 870.80 281.8 V286.6 Z" fill="#0f9d58"/>
<rect x="864.47" y="287.2" width="6.32" height="113.8" fill="#bdbdbd"/>
<path d="M871.70 286.6 V281.8 Q871.70 280.2 873.30 280.2 H876.42 Q878.02 280.2 878.02 281.8 V286.6 Z" fill="#0f9d58"/>
<rect x="871.70" y="287.2" width="6.32" height="113.8" fill="#bdbdbd"/>
<path d="M878.92 286.6 V281.8 Q878.92 280.2 880.52 280.2 H883.64 Q885.24 280.2 885.24 281.8 V286.6 Z" fill="#0f9d58"/>
<rect x="878.92" y="287.2" width="6.32" height="113.8" fill="#bdbdbd"/>
<path d="M886.14 285.9 V280.9 Q886.14 279.3 887.74 279.3 H890.86 Q892.46 279.3 892.46 280.9 V285.9 Z" fill="#0f9d58"/>
<rect x="886.14" y="286.5" width="6.32" height="114.5" fill="#bdbdbd"/>
<path d="M893.36 285.9 V280.9 Q893.36 279.3 894.96 279.3 H898.09 Q899.69 279.3 899.69 280.9 V285.9 Z" fill="#0f9d58"/>
<rect x="893.36" y="286.5" width="6.32" height="114.5" fill="#bdbdbd"/>
<path d="M900.59 285.9 V280.9 Q900.59 279.3 902.19 279.3 H905.31 Q906.91 279.3 906.91 280.9 V285.9 Z" fill="#0f9d58"/>
<rect x="900.59" y="286.5" width="6.32" height="114.5" fill="#bdbdbd"/>
<path d="M907.81 285.9 V280.9 Q907.81 279.3 909.41 279.3 H912.53 Q914.13 279.3 914.13 280.9 V285.9 Z" fill="#0f9d58"/>
<rect x="907.81" y="286.5" width="6.32" height="114.5" fill="#bdbdbd"/>
<path d="M915.03 285.9 V280.9 Q915.03 279.3 916.63 279.3 H919.75 Q921.35 279.3 921.35 280.9 V285.9 Z" fill="#0f9d58"/>
<rect x="915.03" y="286.5" width="6.32" height="114.5" fill="#bdbdbd"/>
<path d="M922.25 285.9 V280.9 Q922.25 279.3 923.85 279.3 H926.98 Q928.58 279.3 928.58 280.9 V285.9 Z" fill="#0f9d58"/>
<rect x="922.25" y="286.5" width="6.32" height="114.5" fill="#bdbdbd"/>
<path d="M929.48 285.9 V280.9 Q929.48 279.3 931.08 279.3 H934.20 Q935.80 279.3 935.80 280.9 V285.9 Z" fill="#0f9d58"/>
<rect x="929.48" y="286.5" width="6.32" height="114.5" fill="#bdbdbd"/>
  <line x1="283" y1="401.5" x2="947" y2="401.5" stroke="#9e9e9e" stroke-width="1"/>
</svg>
<div class="abs" style="left:258px;top:250px;font-size:9.5px;line-height:11px;color:#5f6368">Pages</div>
<div class="yl" style="top:263px">60K</div>
<div class="yl" style="top:307px">40K</div>
<div class="yl" style="top:351px">20K</div>
<div class="yl" style="top:396px">0</div>
<div class="xl" style="left:283px">8/2/24</div>
<div class="xl" style="left:360px">8/13/24</div>
<div class="xl" style="left:446px">8/25/24</div>
<div class="xl" style="left:536px">9/6/24</div>
<div class="xl" style="left:613px">9/17/24</div>
<div class="xl" style="left:699px">9/29/24</div>
<div class="xl" style="left:783px">10/11/24</div>
<div class="xl" style="left:869px">10/23/24</div>

<div class="abs" style="left:271px;top:456px;width:680px;height:53px;border:1px solid #dadce0;border-radius:12px;background:#fff"></div>
<svg class="abs" style="left:292.5px;top:474px" width="16" height="16" viewBox="0 0 16 16"><circle cx="8" cy="8" r="8" fill="#188038"/><path d="M3.8 8.2 L6.7 11 L12.2 5.3" fill="none" stroke="#fff" stroke-width="1.8"/></svg>
<div class="abs" style="left:323px;top:473.5px;font-size:12px;line-height:16px;color:#202124;white-space:nowrap">View data about indexed pages</div>
<svg class="abs" style="left:916px;top:476px" width="12" height="13" viewBox="0 0 12 13"><path d="M3 1.8 L8 6.5 L3 11.2" fill="none" stroke="#5f6368" stroke-width="1.5"/></svg>

<div class="card" style="top:560px;height:320px"></div>
<svg class="abs" style="left:263.500px;top:588.500px" width="27" height="27" viewBox="0 0 27 27"><circle cx="13.5" cy="13.5" r="13.5" fill="#9e9e9e"/><rect x="12.100" y="11.700" width="2.800" height="8.300" fill="#fff"/><rect x="12.100" y="7" width="2.800" height="2.800" fill="#fff"/></svg>
<div class="abs" style="left:312px;top:585px;font-size:18px;line-height:24px;color:#202124;white-space:nowrap;letter-spacing:-0.17px">Why pages aren&rsquo;t indexed</div>
<div class="abs" style="left:312px;top:611px;font-size:11.800px;line-height:15px;color:#757575;white-space:nowrap">Pages that aren't indexed can't be served on Google</div>
<div class="abs" style="left:938px;top:599px;width:15px;height:1px;background:#3c4043"></div>
<div class="abs" style="left:941px;top:603px;width:9px;height:1px;background:#3c4043"></div>
<div class="abs" style="left:944px;top:607px;width:3px;height:1px;background:#3c4043"></div>

<div class="abs" style="left:264px;top:662px;color:#757575;font-size:9.600px;line-height:13px">Reason</div>
<div class="abs" style="left:567px;top:663px;color:#757575;font-size:9.600px;line-height:13px">Source</div>
<svg class="abs" style="left:605.500px;top:662.500px" width="13" height="13" viewBox="0 0 13 13"><circle cx="6.5" cy="6.5" r="5.500" fill="none" stroke="#757575" stroke-width="1"/><text x="6.5" y="9.600" text-anchor="middle" font-family="Liberation Sans" font-size="8.500" fill="#757575">?</text></svg>
<div class="abs" style="left:686.500px;top:662px;color:#202124;font-size:10px;line-height:13px;-webkit-text-stroke:0.400px #202124">Validation</div>
<svg class="abs" style="left:735px;top:663px" width="12" height="12" viewBox="0 0 12 12"><path d="M6 1.500 V10 M2 6.200 L6 10.200 L10 6.200" fill="none" stroke="#202124" stroke-width="1.300"/></svg>
<div class="abs" style="left:810.500px;top:662px;color:#757575;font-size:9.600px;line-height:13px">Trend</div>
<div class="abs" style="left:929px;top:662px;color:#757575;font-size:9.600px;line-height:13px">Pages</div>
<div class="row" style="top:692px"></div>
<div class="row" style="top:732px"></div>
<div class="row" style="top:773px"></div>
<div class="row" style="top:813px"></div>

<svg class="abs" style="left:0;top:0" width="957" height="846" viewBox="0 0 957 846"><path d="M810.5 704.8 H836 L838 703.6 H861.3" fill="none" stroke="#616161" stroke-width="1.2"/>
<path d="M810.5 749.1 H848 L850 750.3 H861.3" fill="none" stroke="#616161" stroke-width="1.2"/>
<path d="M810.5 794.8 H858 L861.3 794.3" fill="none" stroke="#616161" stroke-width="1.2"/>
<path d="M810.5 833.9 H848 L850 835 H861.3" fill="none" stroke="#616161" stroke-width="1.2"/></svg>
<div class="rsn" style="top:704.0px">Not found (404)</div><div class="src" style="top:704.0px">Website</div><div class="vi" style="top:702.5px"></div><div class="ns" style="top:704.0px">Not Started</div><div class="num" style="top:704.0px">28,983</div>
<div class="rsn" style="top:745.0px">Page with redirect</div><div class="src" style="top:745.0px">Website</div><div class="vi" style="top:743.5px"></div><div class="ns" style="top:745.0px">Not Started</div><div class="num" style="top:745.0px">15,276</div>
<div class="rsn" style="top:785.0px">Alternate page with proper canonical tag</div><div class="src" style="top:785.0px">Website</div><div class="vi" style="top:783.5px"></div><div class="ns" style="top:785.0px">Not Started</div><div class="num" style="top:785.0px">2,709</div>
<div class="rsn" style="top:825.0px">Excluded by ‘noindex’ tag</div><div class="src" style="top:825.0px">Website</div><div class="vi" style="top:823.5px"></div><div class="ns" style="top:825.0px">Not Started</div><div class="num" style="top:825.0px">1,399</div>
<div class="red" style="left:259px;top:808px;width:137px;height:36px"></div>
</body></html>
